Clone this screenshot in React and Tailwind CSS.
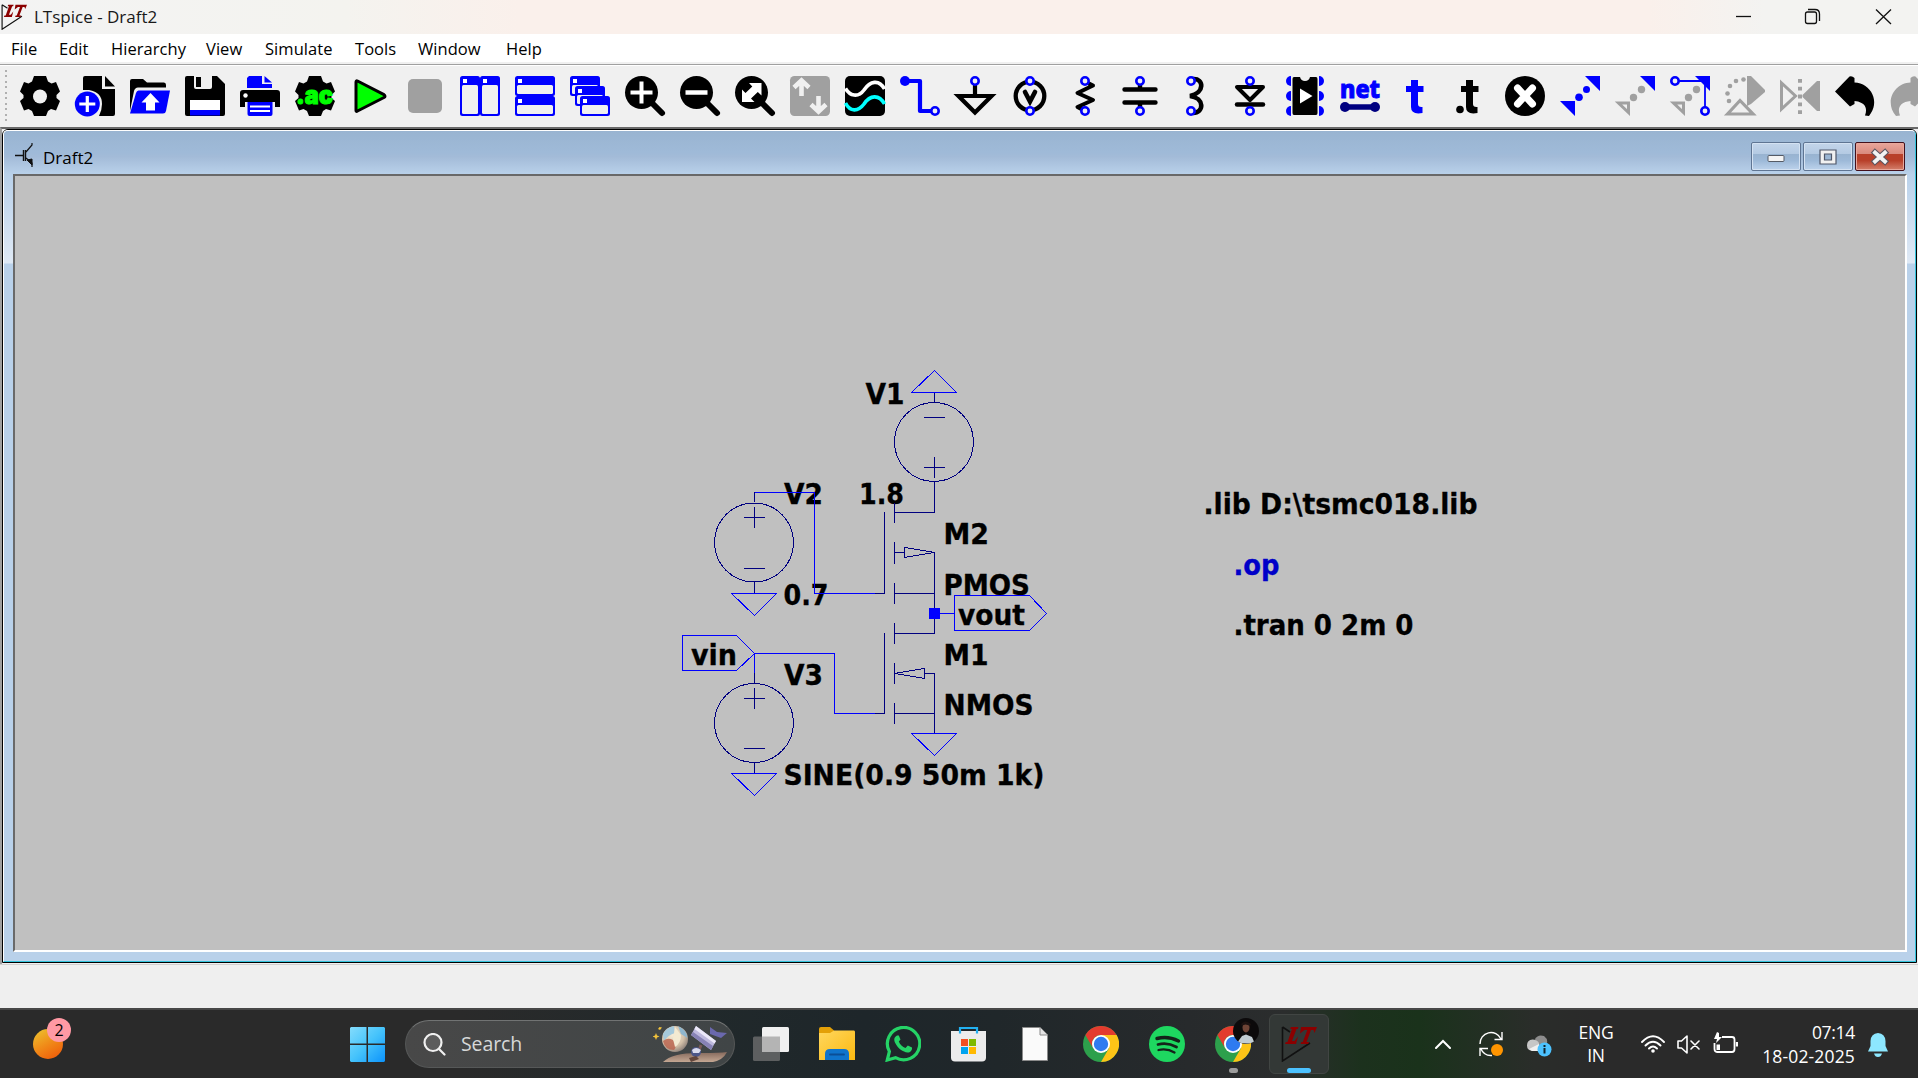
import React from "react";

const BLUE = "#0000ff";
const NAVY = "#000080";
const GREY = "#a0a0a0";

/* 40x40 toolbar icon frame */
function Ic({ children }) {
  return (
    <svg width="40" height="40" viewBox="0 0 40 40" className="shrink-0 overflow-visible" fill="none">
      {children}
    </svg>
  );
}

const Ring = ({ x, y }) => <circle cx={x} cy={y} r="3.7" fill="#f0f0f0" stroke={BLUE} strokeWidth="2.6" />;

const Gear = () => (
  <path
    fill="#000"
    d="M14 0H26L28 5.5L31.500 7.500L36 6L40 15.500L36.500 19V22L40 25L36 34.500L31 33L28 35L26 40H14L12 35L8.500 33L4 34.500L0 25L3.500 22V19L0 15.500L4 6L8.500 7.500L12 5.500Z"
  />
);

const MiniWin = ({ x, y, w, h }) => (
  <g>
    <rect x={x} y={y} width={w} height={h} rx="2.500" fill={BLUE} />
    <rect x={x + 2} y={y + 9} width={w - 4} height={h - 11} rx="1.500" fill="#f0f0f0" />
    <rect x={x + 3} y={y + 3} width="4" height="4" fill="#fff" />
  </g>
);

const Lens = ({ children }) => (
  <Ic>
    <path d="M27 27L37 37" stroke="#000" strokeWidth="6" strokeLinecap="round" />
    <circle cx="16.500" cy="16.500" r="16.500" fill="#000" />
    {children}
  </Ic>
);

const BoldT = ({ x, color }) => (
  <path
    d={`M${x + 5} 4H${x + 12}V10H${x + 17.500}V16H${x + 12}V28Q${x + 12} 31.500 ${x + 16.500} 31V37Q${x + 5} 39 ${x + 5} 31V16H${x}V10H${x + 5}Z`}
    fill={color}
  />
);

const toolIcons = [
  <Ic>
    <Gear />
    <circle cx="20" cy="20.500" r="7" fill="#f0f0f0" />
  </Ic>,
  <Ic>
    <path d="M10 0H27V13H40V38Q40 40 38 40H24Q27 34 27 28Q27 16 14 14H8V2Q8 0 10 0Z" fill="#000" />
    <path d="M30 0L40 10.500H30Z" fill="#000" />
    <circle cx="12.300" cy="28" r="12.500" fill={BLUE} />
    <path d="M12.300 20V36M4.300 28H20.300" stroke="#fff" strokeWidth="3.200" />
  </Ic>,
  <Ic>
    <path d="M0 35V5Q0 3 2 3H13L17 6.500H34Q36 6.500 36 9V11.500H8Q5 11.500 4 15Z" fill="#000" />
    <path d="M8.500 14.500H40L36 35Q35.500 37.500 33 37.500H0L6 17Q6.800 14.500 8.500 14.500Z" fill={BLUE} />
    <path d="M20.500 17L29.500 26.500H25V34.500H16V26.500H11.500Z" fill="#fff" />
  </Ic>,
  <Ic>
    <path d="M2 0H32L40 8V38Q40 40 38 40H2Q0 40 0 38V2Q0 0 2 0Z" fill="#000" />
    <path d="M9 0H27V11Q27 13 25 13H11Q9 13 9 11Z" fill="#f0f0f0" />
    <rect x="11" y="1" width="5" height="10" fill="#000" />
    <rect x="5" y="24" width="30" height="10" fill="#fff" />
    <rect x="5" y="34" width="30" height="5.500" fill={BLUE} />
  </Ic>,
  <Ic>
    <path d="M9 0H22V8H32V12H7V2Z" fill={BLUE} />
    <path d="M24.500 0L32 6.500H24.500Z" fill={BLUE} />
    <path d="M3 14H37Q40 14 40 17V31H35V26H5V31H0V17Q0 14 3 14Z" fill="#000" />
    <circle cx="5.500" cy="19.500" r="2.200" fill="#fff" />
    <path d="M7.500 26H32.500V38Q32.500 40 30.500 40H9.500Q7.500 40 7.500 38Z" fill={BLUE} />
    <path d="M10 30.500H30M10 35H30" stroke="#fff" strokeWidth="1.800" />
  </Ic>,
  <Ic>
    <Gear />
    <text x="1" y="27.500" fontSize="25" fontWeight="900" fontFamily="Inter, sans-serif" fill="#00ff00" stroke="#00ff00" strokeWidth="1" textLength="37" lengthAdjust="spacingAndGlyphs">.ac</text>
  </Ic>,
  <Ic>
    <path d="M6 6V34.500Q6 36 7.500 35L34 21.500Q36 20.200 34 18.700L7.500 5Q6 4.300 6 6Z" fill="#00ff00" stroke="#000" strokeWidth="3" strokeLinejoin="round" />
  </Ic>,
  <Ic>
    <rect x="3" y="3" width="34" height="34" rx="5" fill={GREY} />
  </Ic>,
  <Ic>
    <MiniWin x={0} y={0} w={20} h={40} />
    <MiniWin x={20} y={0} w={20} h={40} />
  </Ic>,
  <Ic>
    <MiniWin x={0} y={0} w={40} h={20} />
    <MiniWin x={0} y={20} w={40} h={20} />
  </Ic>,
  <Ic>
    <MiniWin x={0} y={0} w={30} h={20} />
    <MiniWin x={5} y={10} w={30} h={20} />
    <MiniWin x={10} y={20} w={30} h={20} />
  </Ic>,
  <Lens>
    <path d="M16.500 5.500V27.500M5.500 16.500H27.500" stroke="#fff" strokeWidth="4" />
  </Lens>,
  <Lens>
    <path d="M5.500 16.500H27.500" stroke="#fff" strokeWidth="4.500" />
  </Lens>,
  <Lens>
    <path d="M14 7H26.500V19.500L22.800 16L16 22.500L19.500 26H7V13.500L10.500 17L17.300 10.500Z" fill="#fff" />
  </Lens>,
  <Ic>
    <rect width="40" height="40" rx="4.500" fill={GREY} />
    <path d="M11.500 4.500V20M4 11.500L11.500 4.500L19 11.500M28.500 20V36M21 28.500L28.500 35.500L36 28.500" stroke="#f0f0f0" strokeWidth="4.600" />
  </Ic>,
  <Ic>
    <rect width="40" height="40" rx="5" fill="#000" />
    <path d="M0.500 12.500C5 20 13 22 19 14C25 5 34 3 39.500 13" stroke="#fff" strokeWidth="3.600" />
    <path d="M0.500 27C5 36 13 36 19 28C25 19 34 18 39.500 28" stroke="#00ffff" strokeWidth="3.600" />
  </Ic>,
  <Ic>
    <path d="M5 5H20V35H34" stroke={BLUE} strokeWidth="4.200" strokeLinejoin="round" />
    <circle cx="5" cy="5" r="5" fill={BLUE} />
    <Ring x={35} y={35} />
  </Ic>,
  <Ic>
    <path d="M20 9V20M3.500 20H36.500L20 36.500Z" stroke="#000" strokeWidth="4.200" />
    <Ring x={20} y={5} />
  </Ic>,
  <Ic>
    <circle cx="20" cy="20" r="14.300" stroke="#000" strokeWidth="4.300" />
    <path d="M15 16L20 25.500L25 16" stroke="#000" strokeWidth="4.600" strokeLinecap="round" />
    <Ring x={20} y={5} />
    <Ring x={20} y={35} />
  </Ic>,
  <Ic>
    <path d="M21 6L28 9.500L12.500 17L28 24L12.500 31L19 34.500" stroke="#000" strokeWidth="4" strokeLinejoin="round" strokeLinecap="round" />
    <Ring x={20} y={5} />
    <Ring x={20} y={35} />
  </Ic>,
  <Ic>
    <path d="M20 9V13M20 27V31M4.500 13.500H35.500M4.500 26.500H35.500" stroke="#000" strokeWidth="4.400" strokeLinecap="round" />
    <Ring x={20} y={5} />
    <Ring x={20} y={35} />
  </Ic>,
  <Ic>
    <path d="M18 3C29 2 30 17 15 20C30 22 29 37 18 37" stroke="#000" strokeWidth="4.600" />
    <Ring x={16} y={5} />
    <Ring x={16} y={35} />
  </Ic>,
  <Ic>
    <path d="M7 11H33L20 24Z" stroke="#000" strokeWidth="4" strokeLinejoin="round" />
    <path d="M7 28.500H33" stroke="#000" strokeWidth="4.500" strokeLinecap="round" />
    <Ring x={20} y={5} />
    <Ring x={20} y={35} />
  </Ic>,
  <Ic>
    {[5, 20, 35].map((y) => (
      <g key={y} fill={BLUE}>
        <circle cx="6" cy={y} r="5" />
        <circle cx="34" cy={y} r="5" />
      </g>
    ))}
    <path d="M6 0H34V40H6Z" fill="#f0f0f0" />
    <path d="M9 1H15Q16 5 20 5Q24 5 25 1H31Q32.500 1 32.500 3V37Q32.500 39 31 39H9Q7.500 39 7.500 37V3Q7.500 1 9 1Z" fill="#000" />
    <path d="M15 12.500L27.500 20L15 27.500Z" fill="#fff" />
  </Ic>,
  <Ic>
    <text x="0" y="22" fontSize="25" fontWeight="800" fontFamily="Noto Sans, sans-serif" fill={BLUE} stroke={BLUE} strokeWidth="1" textLength="40" lengthAdjust="spacingAndGlyphs">net</text>
    <path d="M5 31H35" stroke={NAVY} strokeWidth="5.500" />
    <circle cx="5" cy="31" r="5" fill={NAVY} />
    <circle cx="35" cy="31" r="5" fill={NAVY} />
  </Ic>,
  <Ic>
    <BoldT x={11} color={BLUE} />
  </Ic>,
  <Ic>
    <BoldT x={11} color="#000" />
    <circle cx="10" cy="33.500" r="3.800" fill="#000" />
  </Ic>,
  <Ic>
    <circle cx="20" cy="20" r="20" fill="#000" />
    <path d="M12.500 12L27.500 28M27.500 12L12.500 28" stroke="#fff" strokeWidth="7" strokeLinecap="round" />
  </Ic>,
  <Ic>
    <path d="M25 0H40V15ZM0 25H15V40Z" fill={BLUE} />
    <circle cx="26.500" cy="13.500" r="3.500" fill={BLUE} />
    <circle cx="19" cy="21.300" r="3.800" fill={BLUE} />
  </Ic>,
  <Ic>
    <path d="M25 0H40V15Z" fill={BLUE} />
    <path d="M3.500 27H13.500V36.500Z" stroke={GREY} strokeWidth="3" />
    <circle cx="26.500" cy="13.500" r="3.700" fill={GREY} />
    <circle cx="18.500" cy="21.500" r="3.700" fill={GREY} />
  </Ic>,
  <Ic>
    <path d="M9 5H35V32" stroke={BLUE} strokeWidth="1.800" />
    <path d="M25 0H40V15Z" fill={BLUE} />
    <path d="M3.500 27H13.500V36.500Z" stroke={GREY} strokeWidth="3" />
    <circle cx="26.500" cy="13.500" r="3.700" fill={GREY} />
    <circle cx="18.500" cy="21.500" r="3.700" fill={GREY} />
    <Ring x={5} y={5} />
    <Ring x={35} y={35} />
  </Ic>,
  <Ic>
    <path d="M22 0H26L40 14V16L26 28L22 30Z" fill={GREY} />
    <path d="M2.500 38L15 24.500L28 38Z" stroke={GREY} strokeWidth="3.200" />
    {[[18.5, 3.5], [11, 5], [5, 10], [2.5, 17.500], [4, 25]].map(([x, y]) => (
      <circle key={y} cx={x} cy={y} r="2.300" fill={GREY} />
    ))}
  </Ic>,
  <Ic>
    <path d="M1.500 7V33L15.500 20Z" stroke={GREY} strokeWidth="3" />
    <path d="M40 5V35H37L22.500 21V19L37 5Z" fill={GREY} />
    <path d="M20 3V38" stroke={GREY} strokeWidth="4" strokeDasharray="3.800 4" />
  </Ic>,
  <Ic>
    <path d="M0 15.500L14.500 0.500Q17 -0.500 19.500 2V6.500C36 7 46 26 34 40L30 39.500C33 32 30 26 19.500 25V28L15 30.500Z" fill="#000" />
  </Ic>,
  <Ic>
    <path d="M40 15.500L25.500 0.500Q23 -0.500 20.500 2V6.500C4 7 -6 26 6 40L10 39.500C7 32 10 26 20.500 25V28L25 30.500Z" fill={GREY} />
  </Ic>,
];

function LTLogo({ size }) {
  return (
    <svg width={size} height={size} viewBox="0 0 36 36" fill="none">
      <path d="M1.500 1V35L29 17M1.500 1L9 6" stroke="#111" strokeWidth="1.600" />
      <path d="M10 1H17.500L16.800 3H15.500L11 15H13.500L17 10.500L15 18H4L4.800 16H6.500L11 3H9.200Z" fill="#8b0000" />
      <path d="M20 1H36L33.500 7L32.500 4H30L25.500 16H28L27.200 18H19.500L20.300 16H21.800L26.300 4H23.500L19 7.500Z" fill="#8b0000" />
    </svg>
  );
}

const menus = [
  ["File", "w-[48px]"],
  ["Edit", "w-[52px]"],
  ["Hierarchy", "w-[95px]"],
  ["View", "w-[59px]"],
  ["Simulate", "w-[90px]"],
  ["Tools", "w-[63px]"],
  ["Window", "w-[88px]"],
  ["Help", "w-[60px]"],
];

const labels = [
  ["V1", 865.5, 404, 39],
  ["V2", 784, 504, 39],
  ["1.8", 859, 504, 45],
  ["0.7", 783.500, 605, 45],
  ["M2", 943.500, 544, 45.500],
  ["PMOS", 943.500, 594.500, 86.500],
  ["vout", 958, 625, 67],
  ["M1", 943.500, 665, 45],
  ["NMOS", 943.500, 715, 90],
  ["vin", 691, 665, 46],
  ["V3", 784, 685, 39],
  ["SINE(0.9 50m 1k)", 783.500, 785, 261],
  [".lib D:\\tsmc018.lib", 1203.500, 514, 274],
  [".tran 0 2m 0", 1233.500, 635, 180],
];

function Schematic() {
  return (
    <svg width="1891" height="775" viewBox="15 176 1891 775" className="block" fill="none">
      <g fontFamily="'DejaVu Sans Condensed', 'DejaVu Sans', sans-serif" fontWeight="700" fontSize="28" fill="#000" stroke="#000" strokeWidth="0.300" style={{ fontStretch: "condensed" }}>
        {labels.map(([t, x, y, w]) => (
          <text key={t} x={x} y={y} textLength={w} lengthAdjust="spacingAndGlyphs">{t}</text>
        ))}
        <text x="1233.500" y="575" textLength="46" lengthAdjust="spacingAndGlyphs" fill="#0000c8" stroke="#0000c8">.op</text>
      </g>
      <g stroke={NAVY} strokeWidth="1" shapeRendering="crispEdges">
        <circle cx="934" cy="442" r="39.500" />
        <circle cx="754" cy="542.500" r="39.500" />
        <circle cx="754" cy="723" r="39.500" />
        <path d="M924 417.500H945M924 467.500H945M934.500 457V478M744 517.500H765M754.500 507V528M744 568.500H765M744 698.500H765M754.500 688V709M744 748.500H765" />
        <path d="M934.500 392V402M934.500 481V512.500H894M754.500 492V502M754.500 582V593M754.500 673V683M754.500 763V773" />
        <path d="M894.500 503V523M894.500 542V564M894.500 583V604M884.500 512V593.500H875M894 552.500H904M904.500 547.500V557.500L934.500 552.500ZM934.500 552V633.500H894M894 593.500H934" />
        <path d="M894.500 623V644M894.500 663V684M894.500 703V724M884.500 633V713.500H875M894.500 673.500L924.500 668.500V678.500ZM925 673.500H934.500V733M894 713.500H934" />
      </g>
      <g stroke={BLUE} strokeWidth="1" shapeRendering="crispEdges">
        <path d="M911.500 392.500H956.500L934.500 370.500ZM731.500 593.500H776.500L754.500 615.500ZM731.500 773.500H776.500L754.500 795.500ZM911.500 733.500H956.500L934.500 755.500Z" />
        <path d="M754.500 492.500H814.500V593.500H875M754.500 673V653.500H834.500V713.500H875M940 613.500H954" />
        <path d="M682.500 635.500H736.500L754.500 653.500L736.500 670.500H682.500ZM954.500 595.500H1029.500L1046.500 613.500L1029.500 630.500H954.500Z" />
        <rect x="929" y="608" width="11" height="11" fill={BLUE} stroke="none" />
      </g>
    </svg>
  );
}

function MdiButton({ red, children }) {
  return (
    <div
      className={
        red
          ? "flex h-[29px] w-[50px] items-center justify-center rounded-[2px] border border-[#43101c] bg-[linear-gradient(#e9a59b_0%,#d98a7e_40%,#b8402a_41%,#b8402a_65%,#d4806c_100%)] shadow-[inset_0_0_0_1px_#e8a89c]"
          : "flex h-[29px] w-[50px] items-center justify-center rounded-[2px] border border-[#5f7593] bg-[linear-gradient(#c3d5ea_0%,#b4cae3_40%,#98b3d0_41%,#9db9d8_65%,#bdd3ec_100%)] shadow-[inset_0_0_0_1px_#d4e2f2]"
      }
    >
      {children}
    </div>
  );
}

function Chrome() {
  return (
    <svg width="36" height="36" viewBox="0 0 36 36">
      <circle cx="18" cy="18" r="18" fill="#2da04c" />
      <path d="M18 9H33.600A18 18 0 0 1 18 36L25.800 22.500Z" fill="#fdc417" />
      <path d="M2.400 9A18 18 0 0 1 33.600 9H18A9 9 0 0 0 10.200 22.500Z" fill="#e33b2e" />
      <circle cx="18" cy="18" r="9" fill="#fff" />
      <circle cx="18" cy="18" r="7.200" fill="#2f7bf0" />
    </svg>
  );
}

function Cell({ children }) {
  return <div className="flex h-[68px] w-[66px] shrink-0 items-center justify-center">{children}</div>;
}

function SearchArt() {
  return (
    <svg width="76" height="40" viewBox="0 0 76 40">
      <defs>
        <radialGradient id="planet" cx="0.400" cy="0.350" r="0.750">
          <stop offset="0" stopColor="#f6ecd8" />
          <stop offset="0.600" stopColor="#d3c0a8" />
          <stop offset="1" stopColor="#7b706c" />
        </radialGradient>
        <linearGradient id="ground" x1="0" y1="0" x2="0" y2="1">
          <stop offset="0" stopColor="#85695c" />
          <stop offset="1" stopColor="#c4a793" />
        </linearGradient>
      </defs>
      <path d="M10 38Q20 28 50 29Q66 29 74 28Q70 36 60 38Z" fill="url(#ground)" />
      <circle cx="22" cy="15" r="13" fill="url(#planet)" />
      <path d="M10 10Q14 3 21 2L22 9Q15 11 11 17Z" fill="#a5c9dc" />
      <path d="M10 17Q15 13 20 16Q25 21 21 26Q12 26 10 17Z" fill="#b9604b" opacity="0.800" />
      <path d="M25 2Q34 6 34.500 14L28 10Z" fill="#8fb6cd" />
      <path d="M22 3L28 11Q28 19 22 23L20 15Z" fill="#f3ead2" />
      <path d="M43 2L63 17L58 26L38 11Z" fill="#bdb8dc" />
      <path d="M43 2L63 17L61.500 19.500L41.500 5Z" fill="#ece9f8" />
      <path d="M40 8L60 22L58 26L38 11Z" fill="#8782b5" />
      <path d="M57 3L64 8L74 9L68 14L57 10Z" fill="#6a68ad" />
      <path d="M48 21L45 29" stroke="#7a5a56" strokeWidth="3" />
      <circle cx="43" cy="28" r="5" fill="#4d5688" />
      <path d="M39 26Q43 22 48 26L46 29H40Z" fill="#d9dbee" />
      <path d="M36 34L43 32L46 35L38 38Z" fill="#63463c" />
      <path d="M3 9L4 11.500L6.500 12.500L4 13.500L3 16L2 13.500L-.5 12.500L2 11.500ZM6.500 3L9 3.500L7 6L5 5Z" fill="#f3c33b" />
    </svg>
  );
}

export default function App() {
  return (
    <div className="flex h-[1078px] w-[1918px] flex-col overflow-hidden bg-[#f0f0f0] font-['Open_Sans','Noto_Sans',sans-serif] text-black">
      {/* title bar */}
      <div className="flex h-[34px] shrink-0 items-center bg-[linear-gradient(90deg,#f3f3f3_0%,#f4f3ef_18%,#faf0eb_27%,#faf0eb_86%,#f3f3f1_92%,#f3f3f1_100%)]">
        <div className="flex w-[34px] items-center pl-[1px]">
          <LTLogo size={26} />
        </div>
        <div className="text-[17px] text-[#191919]">LTspice - Draft2</div>
        <div className="ml-auto flex items-center">
          <svg width="182" height="34" viewBox="1736 0 182 34" fill="none" stroke="#111" strokeWidth="1.300">
            <path d="M1736 16.500H1751" />
            <rect x="1805.500" y="12" width="11" height="11.500" rx="2" />
            <path d="M1808 9.500H1815Q1819.500 9.500 1819.500 14V21" />
            <path d="M1876 9.500L1891 24M1891 9.500L1876 24" />
          </svg>
        </div>
      </div>

      {/* menu bar */}
      <div className="flex h-[28px] shrink-0 items-center bg-white pl-[11px] pt-[3px] text-[16.500px] leading-none tracking-[0.050px]">
        {menus.map(([m, w]) => (
          <div key={m} className={w}>{m}</div>
        ))}
      </div>
      <div className="h-[4px] shrink-0 border-b border-white bg-[linear-gradient(#f0f0f0_67%,#a0a0a0_67%)]" />

      {/* tool bar */}
      <div className="flex h-[61px] shrink-0 items-start overflow-hidden pt-[10px]">
        <div className="-mt-[6px] ml-[5px] mr-[13px] h-[54px] w-[2px] shrink-0 bg-[repeating-linear-gradient(#b0b0b0_0_2px,#f0f0f0_2px_5.500px)]" />
        <div className="flex shrink-0 gap-[15px]">
          {toolIcons.map((icon, i) => (
            <React.Fragment key={i}>{icon}</React.Fragment>
          ))}
        </div>
      </div>

      {/* MDI area */}
      <div className="flex h-[837px] shrink-0 flex-col border-l-2 border-t-2 border-l-[#a0a0a0] border-t-[#696969]">
        <div className="flex h-[834px] w-[1915px] flex-col rounded-t-[6px] border border-black border-b-black">
          <div className="flex min-h-0 flex-1 flex-col rounded-t-[5px] border border-white border-b-[#33c4dc] border-r-[#33c4dc] bg-[#b9d1ea]">
            <div className="flex h-[43px] shrink-0 items-center rounded-t-[4px] bg-[linear-gradient(#99b4d1_0%,#9fbad8_50%,#a3bbd8_60%,#b9d1ea_100%)] pl-[11px] pr-[10px]">
              <svg width="18" height="24" viewBox="0 0 18 24" fill="none" stroke="#111" className="mt-[5px]">
                <path d="M0 12.500H8M8.500 7V18M10.500 7V18" strokeWidth="1.400" />
                <path d="M11 9L17 2V0M11 15L17 20V24" strokeWidth="1.200" />
                <path d="M12 17L17 16V22Z" fill="#111" />
              </svg>
              <div className="ml-[10px] mt-[10px] text-[17px] leading-none">Draft2</div>
              <div className="ml-auto mt-[8px] flex gap-[2px]">
                <MdiButton>
                  <svg width="18" height="18" viewBox="0 0 18 18"><rect x="1" y="7.500" width="16" height="6" rx="1" fill="#f4f4f4" stroke="#555b66" /></svg>
                </MdiButton>
                <MdiButton>
                  <svg width="18" height="16" viewBox="0 0 18 16"><path d="M1 1H17V15H1ZM5.500 5V11H12.500V5Z" fill="#f1f1f1" fillRule="evenodd" stroke="#50586a" strokeWidth="1.200" /></svg>
                </MdiButton>
                <MdiButton red>
                  <svg width="20" height="18" viewBox="0 0 20 18" fill="none" strokeLinecap="square"><path d="M5 4.500L15 13.500M15 4.500L5 13.500" stroke="#5b5560" strokeWidth="6" /><path d="M5 4.500L15 13.500M15 4.500L5 13.500" stroke="#f3f3f3" strokeWidth="3.800" /></svg>
                </MdiButton>
              </div>
            </div>
            <div className="flex h-[777px] shrink-0">
              <div className="w-[9px] bg-[linear-gradient(#b9d1ea_0px,#dfe9f5_89px,#b9d1ea_90px)]" />
              <div className="box-border h-[778px] w-[1894px] overflow-hidden border-2 border-b-white border-l-[#696969] border-r-white border-t-[#696969] bg-[#c0c0c0]">
                <Schematic />
              </div>
              <div className="flex-1 bg-[linear-gradient(#b9d1ea_0px,#dfe9f5_89px,#b9d1ea_90px)]" />
            </div>
          </div>
        </div>
      </div>

      {/* status strip */}
      <div className="h-[44px] shrink-0 border-t border-[#d0d0d0] bg-[#efefef]" />

      {/* taskbar */}
      <div className="flex h-[70px] shrink-0 items-center border-t-2 border-[#474848] bg-[linear-gradient(90deg,#2a2a2a_0%,#2a2a2a_24%,#21292b_36%,#1e262a_45%,#20272a_52%,#272a2c_62%,#2b2d2d_67%,#1c311d_71%,#1a321b_74%,#2a2d2a_80%,#2a2a2a_83%,#2a2a2a_100%)]">
        <div className="relative ml-[33px] h-[30px] w-[30px] rounded-full bg-[linear-gradient(150deg,#ecc02e_5%,#f08a18_50%,#ef5e0a_90%)]">
          <div className="absolute -top-[11px] left-[14px] flex h-[24px] w-[24px] items-center justify-center rounded-full bg-[#ff99a4] text-[16px] leading-none text-black">2</div>
        </div>
        <svg width="35" height="35" viewBox="0 0 35 35" className="ml-[287px]">
          <defs>
            <linearGradient id="win" x1="0" y1="0" x2="1" y2="1">
              <stop offset="0" stopColor="#84dcfc" />
              <stop offset="0.500" stopColor="#45c3fb" />
              <stop offset="1" stopColor="#0c93fb" />
            </linearGradient>
          </defs>
          <path d="M1 0H16.500V16.500H0V1ZM18 0H34L35 1V16.500H18ZM0 18H16.500V35H1L0 34ZM18 18H35V34L34 35H18Z" fill="url(#win)" />
        </svg>
        <div className="ml-[20px] flex h-[48px] w-[330px] shrink-0 items-center rounded-full border border-[#565858] border-t-[#717373] bg-[linear-gradient(90deg,#484848,#404546)] pl-[17px] pr-[5px]">
          <svg width="23" height="23" viewBox="0 0 23 23" fill="#5c5c5c" stroke="#f0f0f0" strokeWidth="2.200">
            <circle cx="10" cy="9.500" r="8.500" />
            <path d="M16 16L21.500 21.500" strokeLinecap="round" />
          </svg>
          <div className="ml-[15px] text-[19.500px] tracking-[-0.100px] text-[#d6d8d8]">Search</div>
          <div className="ml-auto"><SearchArt /></div>
        </div>
        <div className="ml-[3px] flex shrink-0">
          <Cell>
            <svg width="36" height="34" viewBox="0 0 36 34">
              <rect x="0" y="9.500" width="27" height="24.500" rx="1.500" fill="#5d5f60" />
              <rect x="9" y="0" width="27" height="25" rx="1.500" fill="#f0f0f0" />
              <path d="M9 9.500H27V25H9Z" fill="#b4b4b4" />
            </svg>
          </Cell>
          <Cell>
            <svg width="36" height="34" viewBox="0 0 36 34">
              <defs><linearGradient id="fold" x1="0" y1="0" x2="1" y2="1"><stop offset="0" stopColor="#ffd75e" /><stop offset="1" stopColor="#fbb911" /></linearGradient></defs>
              <path d="M0 2Q0 0 2 0H11L15 3.500V8H0Z" fill="#e3a008" />
              <path d="M0 6H11L15 3.500H35Q36 3.500 36 5V33H0Z" fill="url(#fold)" />
              <path d="M6 33V27Q6 22 11 22H25Q30 22 30 27V33Z" fill="#0f74cc" />
              <path d="M11 27.500H25" stroke="#0b4e96" strokeWidth="1.800" strokeLinecap="round" />
            </svg>
          </Cell>
          <Cell>
            <svg width="36" height="36" viewBox="0 0 36 36">
              <path d="M2.300 34L4.400 25.500A16.200 16.200 0 1 1 10.500 31.700Z" fill="none" stroke="#25d366" strokeWidth="3.200" />
              <path d="M12 9.500C9 11 8.500 14 10.500 17.500C13 22.500 18 26 22.500 26.500C25 26.700 27.500 24.500 27 21.500L22.800 19.500L20.500 22C17.500 21 15 18.500 13.800 15.500L15.500 13.500L13.800 9.500Z" fill="#25d366" />
            </svg>
          </Cell>
          <Cell>
            <svg width="36" height="36" viewBox="0 0 36 36">
              <path d="M0 5H35V31.500Q35 35.500 31 35.500H4Q0 35.500 0 31.500Z" fill="#ececec" />
              <path d="M9 7.500V2H26V7.500" fill="none" stroke="#22b0f0" strokeWidth="2.200" />
              <rect x="10" y="13" width="7" height="7" fill="#f25022" />
              <rect x="18" y="13" width="7" height="7" fill="#7fba00" />
              <rect x="10" y="21" width="7" height="7" fill="#00a4ef" />
              <rect x="18" y="21" width="7" height="7" fill="#ffb900" />
            </svg>
          </Cell>
          <Cell>
            <svg width="26" height="34" viewBox="0 0 26 34">
              <path d="M.5.500H18L25.500 8V33.500H.5Z" fill="#fafafa" stroke="#8a8a8a" />
              <path d="M18 .5V8H25.500" fill="#e4e4e4" stroke="#8a8a8a" />
            </svg>
          </Cell>
          <Cell><Chrome /></Cell>
          <Cell>
            <svg width="36" height="36" viewBox="0 0 36 36" fill="none" stroke="#14231a" strokeLinecap="round">
              <circle cx="18" cy="18" r="18" fill="#1ed760" stroke="none" />
              <path d="M8 12.500Q19 9.500 29.500 15" strokeWidth="3.400" />
              <path d="M9 18.500Q18.500 16 27.500 21" strokeWidth="2.800" />
              <path d="M9.500 24Q18 22 25.500 26.500" strokeWidth="2.300" />
            </svg>
          </Cell>
          <Cell>
            <div className="relative">
              <Chrome />
              <svg width="26" height="26" viewBox="0 0 26 26" className="absolute -top-[8px] left-[18px]">
                <defs><clipPath id="face"><circle cx="13" cy="13" r="13" /></clipPath></defs>
                <g clipPath="url(#face)">
                  <rect width="26" height="26" fill="#0c0a0b" />
                  <ellipse cx="13" cy="9.500" rx="3.500" ry="5" fill="#6f4436" />
                  <path d="M8 6Q12 1 18 6L17 8Q12 5 9 8Z" fill="#1c1211" />
                  <path d="M4 25L9 18L13 16.500L19 19L22 26Z" fill="#c2cdd3" />
                </g>
              </svg>
              <div className="absolute -bottom-[11px] left-[14px] h-[5px] w-[9px] rounded-full bg-[#9c9c9c]" />
            </div>
          </Cell>
          <Cell>
            <div className="relative flex h-[60px] w-[60px] items-center justify-center rounded-[6px] border border-[#414543] bg-[#333836]">
              <LTLogo size={36} />
              <div className="absolute bottom-0 left-[17px] h-[5px] w-[24px] rounded-full bg-[#4cc2ff]" />
            </div>
          </Cell>
        </div>

        {/* tray */}
        <div className="ml-auto flex items-center">
          <svg width="16" height="10" viewBox="0 0 16 10" fill="none" stroke="#fff" strokeWidth="2">
            <path d="M1 9L8 2L15 9" strokeLinecap="round" />
          </svg>
          <svg width="25" height="26" viewBox="0 0 25 26" fill="none" stroke="#fff" strokeWidth="1.400" className="ml-[28px]">
            <path d="M1 13A11 11 0 0 1 22 8M23 1V8.500H15.500M1 25V17.500H9M2 18A11 11 0 0 0 13 24.500" />
            <circle cx="18" cy="19" r="6" fill="#ff9500" stroke="none" />
          </svg>
          <svg width="25" height="22" viewBox="0 0 25 22" className="ml-[23px] mt-[4px]">
            <path d="M8 4Q11 -1 17 1Q21 4 20 8L10 12Z" fill="#8d8d8d" />
            <path d="M5 16Q0 15 0 10.500Q0 5 5.500 4.500Q10 4.500 12 8V16Z" fill="#c6c6c6" />
            <path d="M2 14L12 9V16H5Z" fill="#f0f0f0" />
            <circle cx="17.500" cy="14.500" r="7" fill="#4cc2ff" />
            <path d="M17.500 13V18.500M17.500 10V12" stroke="#10242e" strokeWidth="2" />
          </svg>
          <div className="ml-[22px] w-[44px] text-center text-[17.500px] leading-[23px] tracking-[-0.200px] text-white">
            ENG
            <br />
            IN
          </div>
          <svg width="24" height="18" viewBox="0 0 24 18" fill="none" stroke="#fff" strokeWidth="1.900" className="ml-[23px]">
            <path d="M1 7Q12 -4.500 23 7M4.500 10.500Q12 3 19.500 10.500M8 13.500Q12 9.500 16 13.500" strokeLinecap="round" />
            <circle cx="12" cy="16" r="1.800" fill="#fff" stroke="none" />
          </svg>
          <svg width="24" height="19" viewBox="0 0 24 19" fill="none" stroke="#fff" strokeWidth="1.600" className="ml-[12px]">
            <path d="M1 6H4.500L10 1V18L4.500 13H1ZM14 6L22 14M22 6L14 14" strokeLinejoin="round" strokeLinecap="round" />
          </svg>
          <svg width="25" height="22" viewBox="0 0 25 22" fill="none" stroke="#fff" strokeWidth="1.800" className="-mt-[3px] ml-[12px]">
            <path d="M9 5H19Q21.500 5 21.500 7.500V17Q21.500 20 19 20H4Q1.500 20 1.500 17V11" />
            <path d="M24 10V14.500" strokeWidth="2.400" />
            <path d="M4 0L1 7H4L3 11L9 5H6V1ZM3.500 18V12.500H7V18Z" fill="#fff" stroke="none" />
          </svg>
          <div className="ml-[13px] w-[104px] text-right text-[17.500px] leading-[24px] text-white">
            <span className="tracking-[-0.300px]">07:14</span>
            <br />
            <span className="whitespace-nowrap tracking-[0.150px]">18-02-2025</span>
          </div>
          <svg width="20" height="24" viewBox="0 0 20 24" fill="#8de7ff" className="ml-[13px] mr-[30px] mt-[1px]">
            <path d="M10 0Q17 .5 17.500 8V13L20 18.500H0L2.500 13V8Q3 .5 10 0ZM6 20.500H14Q13 24 10 24Q7 24 6 20.500Z" />
          </svg>
        </div>
      </div>
    </div>
  );
}
